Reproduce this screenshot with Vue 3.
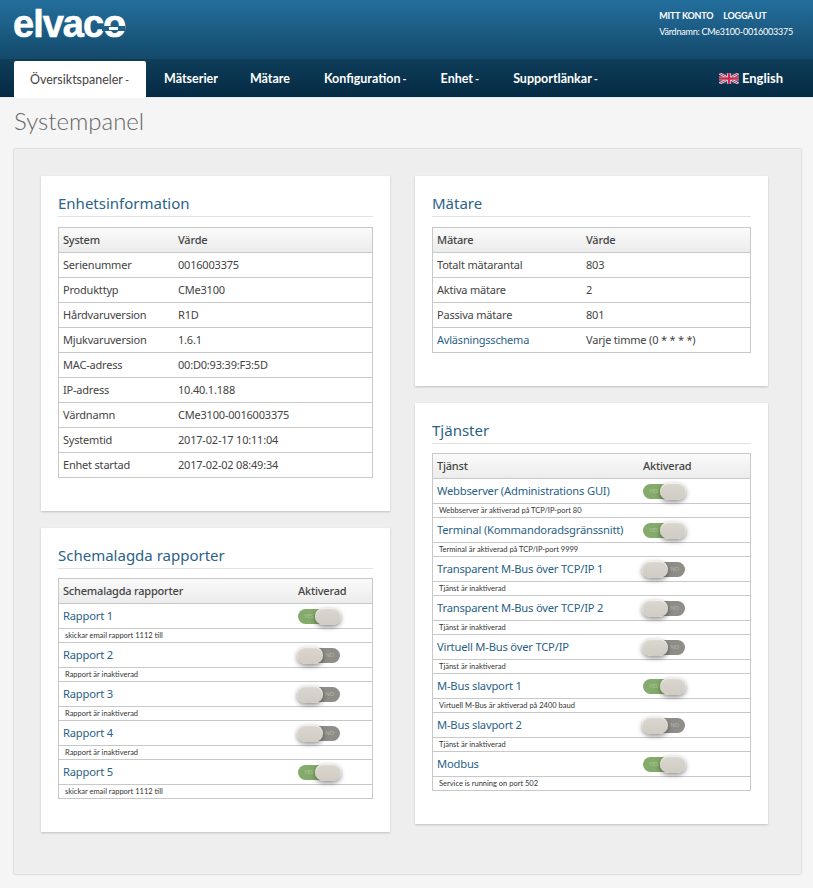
<script setup>
const navItems = [
  { label: 'Översiktspaneler', active: true, caret: true },
  { label: 'Mätserier' },
  { label: 'Mätare' },
  { label: 'Konfiguration', caret: true },
  { label: 'Enhet', caret: true },
  { label: 'Supportlänkar', caret: true }
]
const deviceRows = [
  ['Serienummer', '0016003375'],
  ['Produkttyp', 'CMe3100'],
  ['Hårdvaruversion', 'R1D'],
  ['Mjukvaruversion', '1.6.1'],
  ['MAC-adress', '00:D0:93:39:F3:5D'],
  ['IP-adress', '10.40.1.188'],
  ['Värdnamn', 'CMe3100-0016003375'],
  ['Systemtid', '2017-02-17 10:11:04'],
  ['Enhet startad', '2017-02-02 08:49:34']
]
const meterRows = [
  { k: 'Totalt mätarantal', v: '803' },
  { k: 'Aktiva mätare', v: '2' },
  { k: 'Passiva mätare', v: '801' },
  { k: 'Avläsningsschema', v: 'Varje timme (0 * * * *)', link: true }
]
const reports = [
  { name: 'Rapport 1', note: 'skickar email rapport 1112 till', on: true },
  { name: 'Rapport 2', note: 'Rapport är inaktiverad', on: false },
  { name: 'Rapport 3', note: 'Rapport är inaktiverad', on: false },
  { name: 'Rapport 4', note: 'Rapport är inaktiverad', on: false },
  { name: 'Rapport 5', note: 'skickar email rapport 1112 till', on: true }
]
const services = [
  { name: 'Webbserver (Administrations GUI)', note: 'Webbserver är aktiverad på TCP/IP-port 80', on: true },
  { name: 'Terminal (Kommandoradsgränssnitt)', note: 'Terminal är aktiverad på TCP/IP-port 9999', on: true },
  { name: 'Transparent M-Bus över TCP/IP 1', note: 'Tjänst är inaktiverad', on: false },
  { name: 'Transparent M-Bus över TCP/IP 2', note: 'Tjänst är inaktiverad', on: false },
  { name: 'Virtuell M-Bus över TCP/IP', note: 'Tjänst är inaktiverad', on: false },
  { name: 'M-Bus slavport 1', note: 'Virtuell M-Bus är aktiverad på 2400 baud', on: true },
  { name: 'M-Bus slavport 2', note: 'Tjänst är inaktiverad', on: false },
  { name: 'Modbus', note: 'Service is running on port 502', on: true }
]
</script>

<template>
  <div class="page">
    <header class="top">
      <div class="logo">elvac<span class="logo-o">o<i class="logo-cut"></i><i class="logo-bar"></i></span></div>
      <div class="account">
        <div class="account-links"><span>MITT KONTO</span><span>LOGGA UT</span></div>
        <div class="host">Värdnamn: CMe3100-0016003375</div>
      </div>
    </header>
    <nav class="nav">
      <a v-for="item in navItems" :key="item.label" class="nav-item" :class="{ active: item.active }">{{ item.label }}<span v-if="item.caret" class="caret">-</span></a>
      <a class="lang">
        <svg class="flag" viewBox="0 0 60 32" width="20" height="11">
          <rect width="60" height="32" fill="#3b3f70" />
          <path d="M0 0L60 32M60 0L0 32" stroke="#f2eef0" stroke-width="7" />
          <path d="M0 0L60 32M60 0L0 32" stroke="#c8294a" stroke-width="3" />
          <path d="M30 0V32M0 16H60" stroke="#f2eef0" stroke-width="11" />
          <path d="M30 0V32M0 16H60" stroke="#c8294a" stroke-width="7" />
        </svg>
        English
      </a>
    </nav>
    <h1 class="title">Systempanel</h1>

    <main class="board">
      <div class="col col-left">
        <section class="card card-device">
          <h2>Enhetsinformation</h2>
          <div class="tbl">
            <div class="row head"><span class="c1">System</span><span>Värde</span></div>
            <div v-for="r in deviceRows" :key="r[0]" class="row"><span class="c1">{{ r[0] }}</span><span>{{ r[1] }}</span></div>
          </div>
        </section>
        <section class="card card-reports">
          <h2>Schemalagda rapporter</h2>
          <div class="tbl">
            <div class="row head"><span class="c1r">Schemalagda rapporter</span><span>Aktiverad</span></div>
            <template v-for="r in reports" :key="r.name">
              <div class="row name-row">
                <a class="link c1r">{{ r.name }}</a>
                <span class="switch" :class="r.on ? 'on' : 'off'"><b class="track-label">{{ r.on ? 'YES' : 'NO' }}</b><i class="knob"></i></span>
              </div>
              <div class="note">{{ r.note }}</div>
            </template>
          </div>
        </section>
      </div>

      <div class="col col-right">
        <section class="card card-meters">
          <h2>Mätare</h2>
          <div class="tbl">
            <div class="row head"><span class="c1m">Mätare</span><span>Värde</span></div>
            <div v-for="r in meterRows" :key="r.k" class="row"><span class="c1m" :class="{ link: r.link }">{{ r.k }}</span><span>{{ r.v }}</span></div>
          </div>
        </section>
        <section class="card card-services">
          <h2>Tjänster</h2>
          <div class="tbl">
            <div class="row head"><span class="c1s">Tjänst</span><span>Aktiverad</span></div>
            <template v-for="s in services" :key="s.name">
              <div class="row name-row">
                <a class="link c1s">{{ s.name }}</a>
                <span class="switch" :class="s.on ? 'on' : 'off'"><b class="track-label">{{ s.on ? 'YES' : 'NO' }}</b><i class="knob"></i></span>
              </div>
              <div class="note">{{ s.note }}</div>
            </template>
          </div>
        </section>
      </div>
    </main>
  </div>
</template>

<style>
html, body { margin: 0; background: #f5f5f5; overflow: hidden; }
</style>

<style scoped>
.page {
  width: 813px;
  height: 888px;
  background: #f5f5f5;
  font-family: "Noto Sans", "Open Sans", sans-serif;
  color: #444;
  overflow: hidden;
}
.top {
  height: 59px;
  box-sizing: border-box;
  background: linear-gradient(#246f9d, #14496b);
  display: flex;
  justify-content: space-between;
  padding: 0 20px 0 13px;
  color: #fff;
}
.logo {
  font-family: "Liberation Sans", sans-serif;
  font-weight: 700;
  font-size: 38px;
  line-height: 44px;
  margin-top: 2px;
  letter-spacing: -1px;
  -webkit-text-stroke: 0.6px #fff;
}
.logo-o { position: relative; display: inline-block; }
.logo-cut {
  position: absolute;
  left: -1px; right: 0; top: 24px;
  height: 5px;
  background: #1d6189;
}
.logo-bar {
  position: absolute;
  left: 6px; right: 7px; top: 25px;
  height: 3px;
  background: #fff;
}
.account {
  padding-top: 10px;
  font-family: "Lato", sans-serif;
  font-size: 9px;
  letter-spacing: -0.22px;
}
.account-links {
  display: flex;
  gap: 10px;
  font-weight: 700;
  line-height: 12px;
  margin-bottom: 4px;
}
.host { line-height: 12px; margin-top: 4px; }
.nav {
  height: 38px;
  box-sizing: content-box;
  background: linear-gradient(#0e3d5a, #062a43);
  border-bottom: 1px solid #e6ebf0;
  display: flex;
  padding-left: 14px;
  font-family: "Lato", sans-serif;
  font-size: 12.5px;
  font-weight: 700;
  color: #fff;
  align-items: stretch;
}
.nav-item {
  display: flex;
  align-items: center;
  padding: 0 17px;
  white-space: nowrap;
}
.nav-item:nth-child(2) { padding-right: 15px; }
.caret { font-size: 11px; margin-left: 2px; }
.nav-item.active {
  background: #fff;
  color: #444;
  font-weight: 400;
  margin-top: 2px;
  margin-bottom: -1px;
  padding: 0 17px 0 16px;
  margin-right: 1px;
  border-radius: 2px 2px 0 0;
}
.lang {
  margin-left: auto;
  margin-right: 30px;
  display: flex;
  align-items: center;
  gap: 3px;
  font-size: 13px;
}
.title {
  margin: 0;
  padding: 8px 0 0 14px;
  font-family: "Lato", sans-serif;
  font-weight: 300;
  font-size: 24px;
  line-height: 30px;
  color: #666;
  height: 30px;
}
.board {
  margin: 13px 12px 0 14px;
  height: 725px;
  box-sizing: border-box;
  background: #eee;
  box-shadow: 0 0 2px rgba(0,0,0,.25);
  display: flex;
  gap: 25px;
  padding: 27px 33px 0 27px;
}
.col { display: flex; flex-direction: column; gap: 17px; }
.col-left { width: 349px; }
.col-right { width: 353px; }
.card {
  background: #fff;
  box-shadow: 0 1px 2px rgba(0,0,0,.2);
  box-sizing: border-box;
  padding: 16px 17px 0 17px;
}
.card-device { height: 335px; }
.card-reports { height: 304px; }
.card-meters { height: 210px; }
.card-services { height: 421px; }
h2 {
  margin: 0 0 10px;
  font-weight: 400;
  font-size: 15px;
  line-height: 23px;
  height: 25px;
  box-sizing: border-box;
  color: #2b6288;
  border-bottom: 1px solid #e2e2e2;
}
.card-reports h2, .card-services h2 { margin-bottom: 9px; }
.tbl {
  border: 1px solid #c8c8c8;
  border-bottom: 0;
  font-size: 11px;
  letter-spacing: -0.2px;
}
.row {
  height: 25px;
  box-sizing: border-box;
  border-bottom: 1px solid #c8c8c8;
  display: flex;
  align-items: center;
  padding: 0 0 2px 4px;
  white-space: nowrap;
}
.head {
  background: linear-gradient(#fafafa, #ececec);
  font-weight: 500;
  color: #444;
}
.c1 { width: 115px; }
.c1r { width: 235px; }
.c1m { width: 149px; }
.c1s { width: 206px; }
.link { color: #2a5f85; }
.name-row .link { font-size: 11.2px; }
.note {
  height: 14px;
  box-sizing: border-box;
  border-bottom: 1px solid #c8c8c8;
  font-family: "Lato", sans-serif;
  font-size: 7.5px;
  line-height: 13px;
  letter-spacing: 0;
  padding-left: 6px;
  color: #333;
  white-space: nowrap;
}
.switch {
  position: relative;
  display: block;
  width: 42px;
  height: 15px;
  margin-top: 2px;
  border-radius: 8px;
}
.switch.on { background: #84ab6b; }
.switch.off { background: #8f8d88; }
.track-label {
  position: absolute;
  top: 4px;
  font-size: 6px;
  line-height: 7px;
  font-weight: 400;
}
.on .track-label { left: 6px; color: #a9c794; }
.off .track-label { right: 6px; color: #b6b4ae; }
.knob {
  position: absolute;
  top: -1px;
  width: 26px;
  height: 17px;
  border-radius: 9px;
  background: linear-gradient(#dbd7d0, #d0ccc4);
  box-shadow: 0 2px 5px rgba(0,0,0,.45), inset 0 1px 1px #f4f2ee;
}
.on .knob { right: -1px; }
.off .knob { left: -1px; }
</style>
